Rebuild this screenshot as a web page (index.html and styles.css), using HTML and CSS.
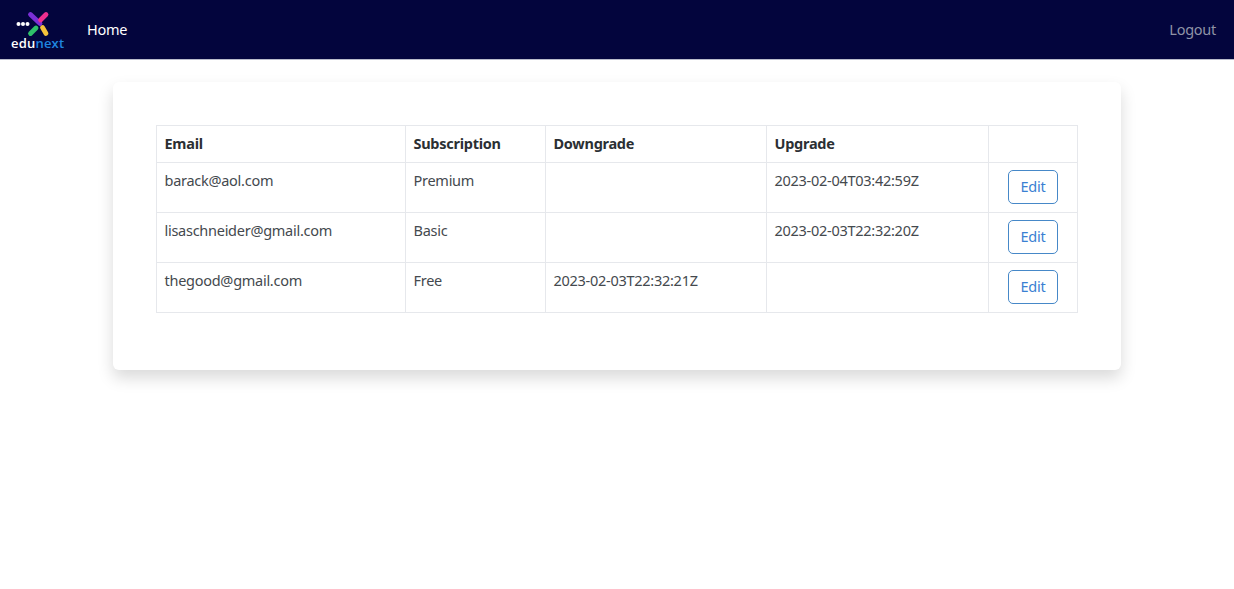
FILE: index.html
```html
<!DOCTYPE html>
<html lang="en">
<head>
<meta charset="utf-8">
<title>Edunext</title>
<link rel="stylesheet" href="styles.css">
</head>
<body>
<nav class="navbar">
  <a class="brand" href="#">
    <svg class="brand-mark" width="36" height="26" viewBox="0 0 36 26" aria-hidden="true">
      <circle cx="2.5" cy="13" r="2" fill="#fff"/>
      <circle cx="7" cy="13" r="2" fill="#fff"/>
      <circle cx="11.5" cy="13" r="2" fill="#fff"/>
      <line x1="14.5" y1="3.5" x2="24" y2="12.5" stroke="#7b2fd6" stroke-width="4.8" stroke-linecap="round"/>
      <line x1="30" y1="3.5" x2="24.5" y2="9" stroke="#ee2f8f" stroke-width="4.8" stroke-linecap="round"/>
      <line x1="14.5" y1="22.5" x2="20" y2="17" stroke="#2fc06a" stroke-width="4.8" stroke-linecap="round"/>
      <line x1="26.5" y1="16.5" x2="30" y2="22.5" stroke="#f5c33b" stroke-width="4.8" stroke-linecap="round"/>
    </svg>
    <span class="brand-name">edu<span class="brand-next">next</span></span>
  </a>
  <a class="nav-link" href="#">Home</a>
  <a class="nav-logout" href="#">Logout</a>
</nav>
<main class="card">
  <table class="data-table">
    <colgroup>
      <col class="col-email"><col class="col-sub"><col class="col-down"><col class="col-up"><col class="col-edit">
    </colgroup>
    <thead>
      <tr><th>Email</th><th>Subscription</th><th>Downgrade</th><th>Upgrade</th><th></th></tr>
    </thead>
    <tbody>
      <tr><td>barack@aol.com</td><td>Premium</td><td></td><td>2023-02-04T03:42:59Z</td><td class="cell-action"><button class="btn-edit">Edit</button></td></tr>
      <tr><td>lisaschneider@gmail.com</td><td>Basic</td><td></td><td>2023-02-03T22:32:20Z</td><td class="cell-action"><button class="btn-edit">Edit</button></td></tr>
      <tr><td>thegood@gmail.com</td><td>Free</td><td>2023-02-03T22:32:21Z</td><td></td><td class="cell-action"><button class="btn-edit">Edit</button></td></tr>
    </tbody>
  </table>
</main>
</body>
</html>
```
FILE: styles.css
```css
* { box-sizing: border-box; }
html, body { margin: 0; padding: 0; background: #fff; }
body {
  font-family: "Noto Sans", "Open Sans", sans-serif;
  font-size: 14.5px;
  letter-spacing: -0.27px;
  line-height: 1.5;
  color: #343a40;
  height: 589px;
  overflow: hidden;
}
a { text-decoration: none; }
.navbar {
  height: 60px;
  background: #03053d;
  display: flex;
  align-items: center;
  padding: 0 18px 0 11px;
  border-bottom: 1px solid #b9bccb;
}
.brand {
  display: flex;
  flex-direction: column;
  width: 54px;
  margin-right: 22px;
  color: #fff;
}
.brand-mark { display: block; margin-left: 5px; margin-top: 1px; }
.brand-name {
  font-family: "Open Sans", sans-serif;
  font-size: 13px;
  font-weight: 600;
  line-height: 13px;
  letter-spacing: 0.2px;
}
.brand-next { color: #1f86e0; }
.nav-link { color: #fff; }
.nav-logout { color: #8f93a6; margin-left: auto; }
.card {
  width: 1008px;
  height: 288px;
  margin: 22px auto 0;
  padding: 43px;
  background: #fff;
  border-radius: 6px;
  box-shadow: 0 8px 16px rgba(0, 0, 0, 0.15);
}
.data-table {
  width: 921px;
  table-layout: fixed;
  border-collapse: collapse;
  color: #44494e;
}
.col-email { width: 249px; }
.col-sub { width: 140px; }
.col-down { width: 221px; }
.col-up { width: 222px; }
.col-edit { width: 89px; }
.data-table th, .data-table td {
  border: 1px solid #e6e8ec;
  padding: 7px 8px 7px 7.5px;
  vertical-align: top;
  text-align: left;
}
.data-table th { font-weight: 700; color: #2b2f33; height: 37px; padding-bottom: 5px; }
.data-table td { height: 50px; }
.data-table .cell-action { padding: 7px 19px 0; }
.btn-edit {
  display: block;
  width: 50px;
  height: 34px;
  padding: 0;
  font: inherit;
  letter-spacing: inherit;
  color: #3a80d2;
  background: #fff;
  border: 1px solid #4688c8;
  border-radius: 5px;
}
```
